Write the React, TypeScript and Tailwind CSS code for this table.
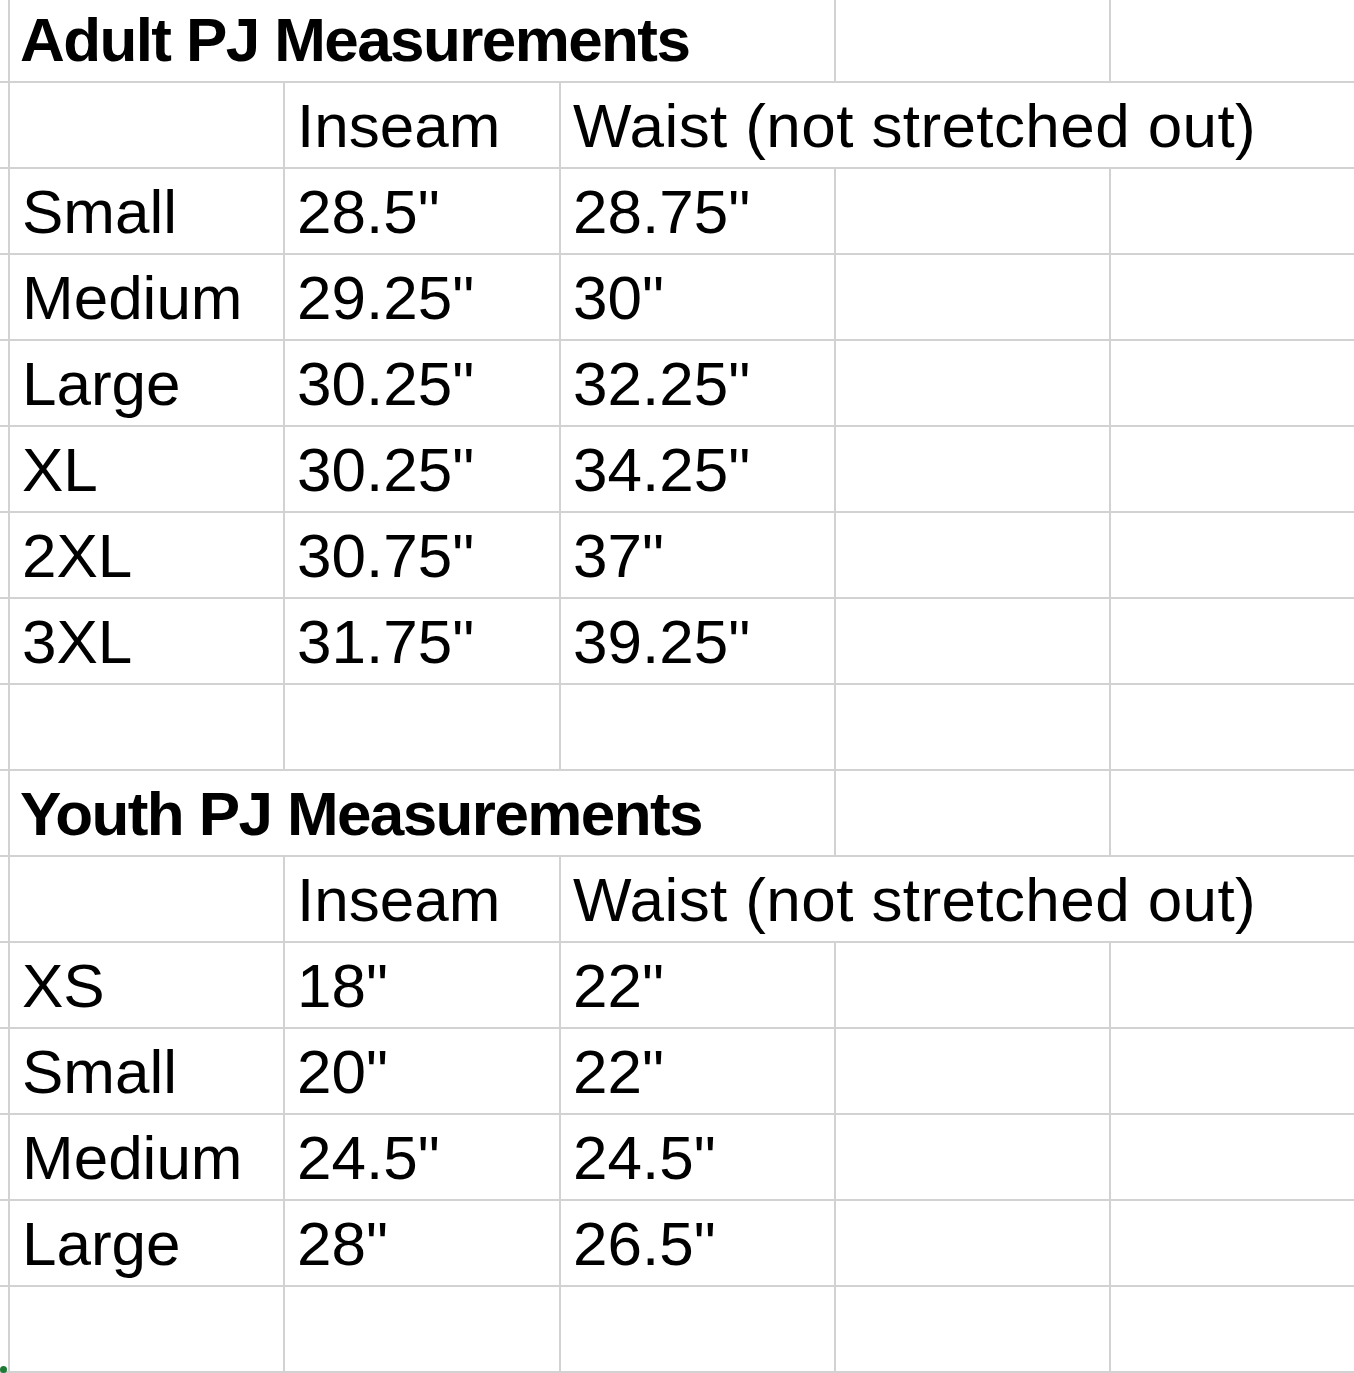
import React from "react";

type Row =
  | { kind: "title"; text: string }
  | { kind: "header" }
  | { kind: "data"; a: string; b: string; c: string }
  | { kind: "empty" };

const rows: Row[] = [
  { kind: "title", text: "Adult PJ Measurements" },
  { kind: "header" },
  { kind: "data", a: "Small", b: '28.5"', c: '28.75"' },
  { kind: "data", a: "Medium", b: '29.25"', c: '30"' },
  { kind: "data", a: "Large", b: '30.25"', c: '32.25"' },
  { kind: "data", a: "XL", b: '30.25"', c: '34.25"' },
  { kind: "data", a: "2XL", b: '30.75"', c: '37"' },
  { kind: "data", a: "3XL", b: '31.75"', c: '39.25"' },
  { kind: "empty" },
  { kind: "title", text: "Youth PJ Measurements" },
  { kind: "header" },
  { kind: "data", a: "XS", b: '18"', c: '22"' },
  { kind: "data", a: "Small", b: '20"', c: '22"' },
  { kind: "data", a: "Medium", b: '24.5"', c: '24.5"' },
  { kind: "data", a: "Large", b: '28"', c: '26.5"' },
  { kind: "empty" },
  { kind: "empty" },
];

const cell =
  "bg-white flex items-end pl-3 pb-[10px] whitespace-nowrap overflow-visible text-[62px] leading-none text-black";

function Strip() {
  return <div className="bg-white" />;
}

export default function App() {
  return (
    <div
      className="relative w-[1354px] h-[1373px] overflow-hidden bg-white"
      style={{ fontFamily: '"Liberation Sans", Arial, sans-serif' }}
    >
      <div className="grid grid-cols-[8px_273px_274px_273px_273px_1fr] grid-rows-[81px_repeat(16,84px)] gap-[2px] bg-[#d2d2d2]">
        {rows.map((r, i) => {
          if (r.kind === "title") {
            return (
              <React.Fragment key={i}>
                <Strip />
                <div className={`${cell} col-span-3 pl-[10px] font-bold tracking-[-1.6px] text-[62px]`}>
                  {r.text}
                </div>
                <div className="bg-white" />
                <div className="bg-white" />
              </React.Fragment>
            );
          }
          if (r.kind === "header") {
            return (
              <React.Fragment key={i}>
                <Strip />
                <div className="bg-white" />
                <div className={cell}>Inseam</div>
                <div className={`${cell} col-span-3 tracking-[0.4px]`}>Waist (not stretched out)</div>
              </React.Fragment>
            );
          }
          if (r.kind === "data") {
            return (
              <React.Fragment key={i}>
                <Strip />
                <div className={cell}>{r.a}</div>
                <div className={cell}>{r.b}</div>
                <div className={cell}>{r.c}</div>
                <div className="bg-white" />
                <div className="bg-white" />
              </React.Fragment>
            );
          }
          return (
            <React.Fragment key={i}>
              <Strip />
              <div className="bg-white" />
              <div className="bg-white" />
              <div className="bg-white" />
              <div className="bg-white" />
              <div className="bg-white" />
            </React.Fragment>
          );
        })}
      </div>
      <div className="absolute left-0 bottom-0 w-[7px] h-[7px] rounded-full bg-[#1e7b34]" />
    </div>
  );
}
